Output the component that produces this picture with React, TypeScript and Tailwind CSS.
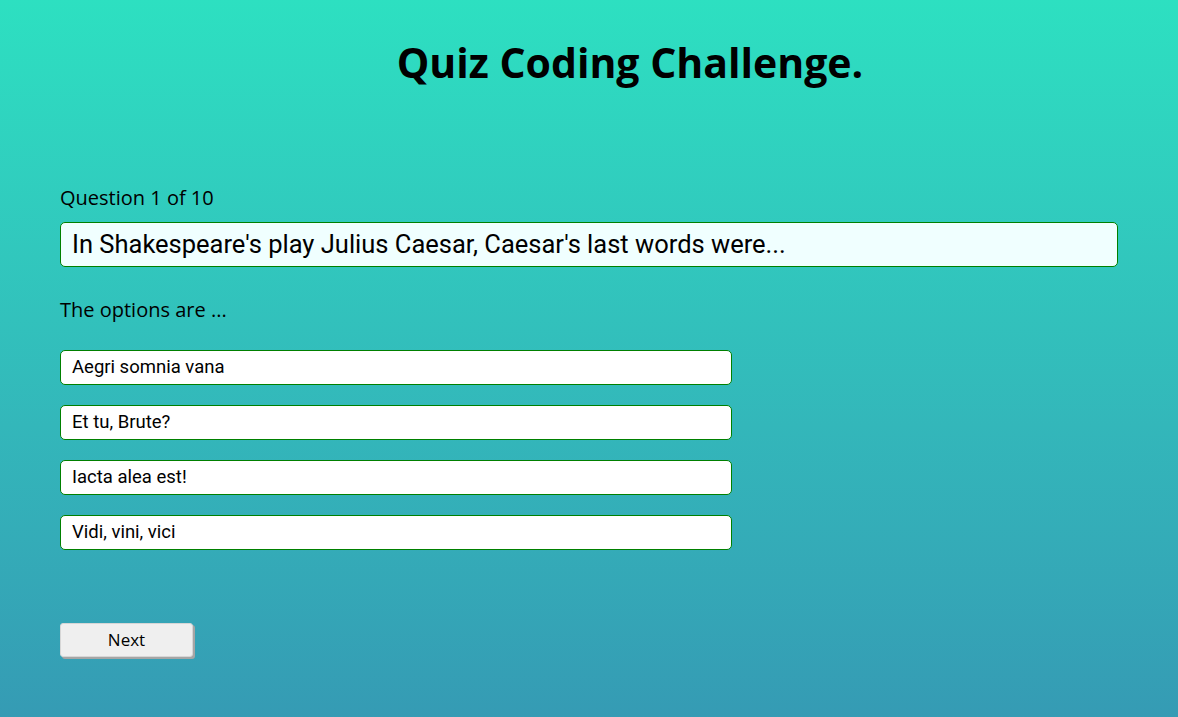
import React, { useState } from "react";

const question = {
  text: "In Shakespeare's play Julius Caesar, Caesar's last words were...",
  options: ["Aegri somnia vana", "Et tu, Brute?", "Iacta alea est!", "Vidi, vini, vici"],
};

export default function App() {
  const [selected, setSelected] = useState<number | null>(null);

  return (
    <div className="min-h-[717px] bg-gradient-to-b from-[#2de0c1] to-[#359bb4] font-['Open_Sans','Noto_Sans',sans-serif] text-black">
      <div className="px-[60px] pt-[34px]">
        <h1 className="pl-[82px] text-center text-[41px] font-bold leading-[56px]">
          Quiz Coding Challenge.
        </h1>

        <p className="mt-[95px] text-[20px] leading-[26px]">Question 1 of 10</p>

        <div className="mt-[11px] flex h-[45px] items-center rounded-[5px] border border-[#008000] bg-[#f0ffff] px-[11px] font-['Roboto',sans-serif] text-[25.5px]">
          {question.text}
        </div>

        <p className="mt-[30px] text-[20px] leading-[26px]">The options are ...</p>

        <div className="mt-[27px] flex flex-col gap-[20px]">
          {question.options.map((opt, i) => (
            <button
              key={opt}
              onClick={() => setSelected(i)}
              className={
                "flex h-[35px] w-[672px] items-center rounded-[5px] border border-[#008000] px-[11px] text-left font-['Roboto',sans-serif] text-[18.5px] " +
                (selected === i ? "bg-[#f0ffff]" : "bg-white")
              }
            >
              {opt}
            </button>
          ))}
        </div>

        <button className="mt-[73px] h-[34px] w-[133px] rounded-[3px] border border-[#d6d6d6] bg-[#efefef] text-[17px] shadow-[2px_2px_0_#a5a5a5]">
          Next
        </button>
      </div>
    </div>
  );
}
